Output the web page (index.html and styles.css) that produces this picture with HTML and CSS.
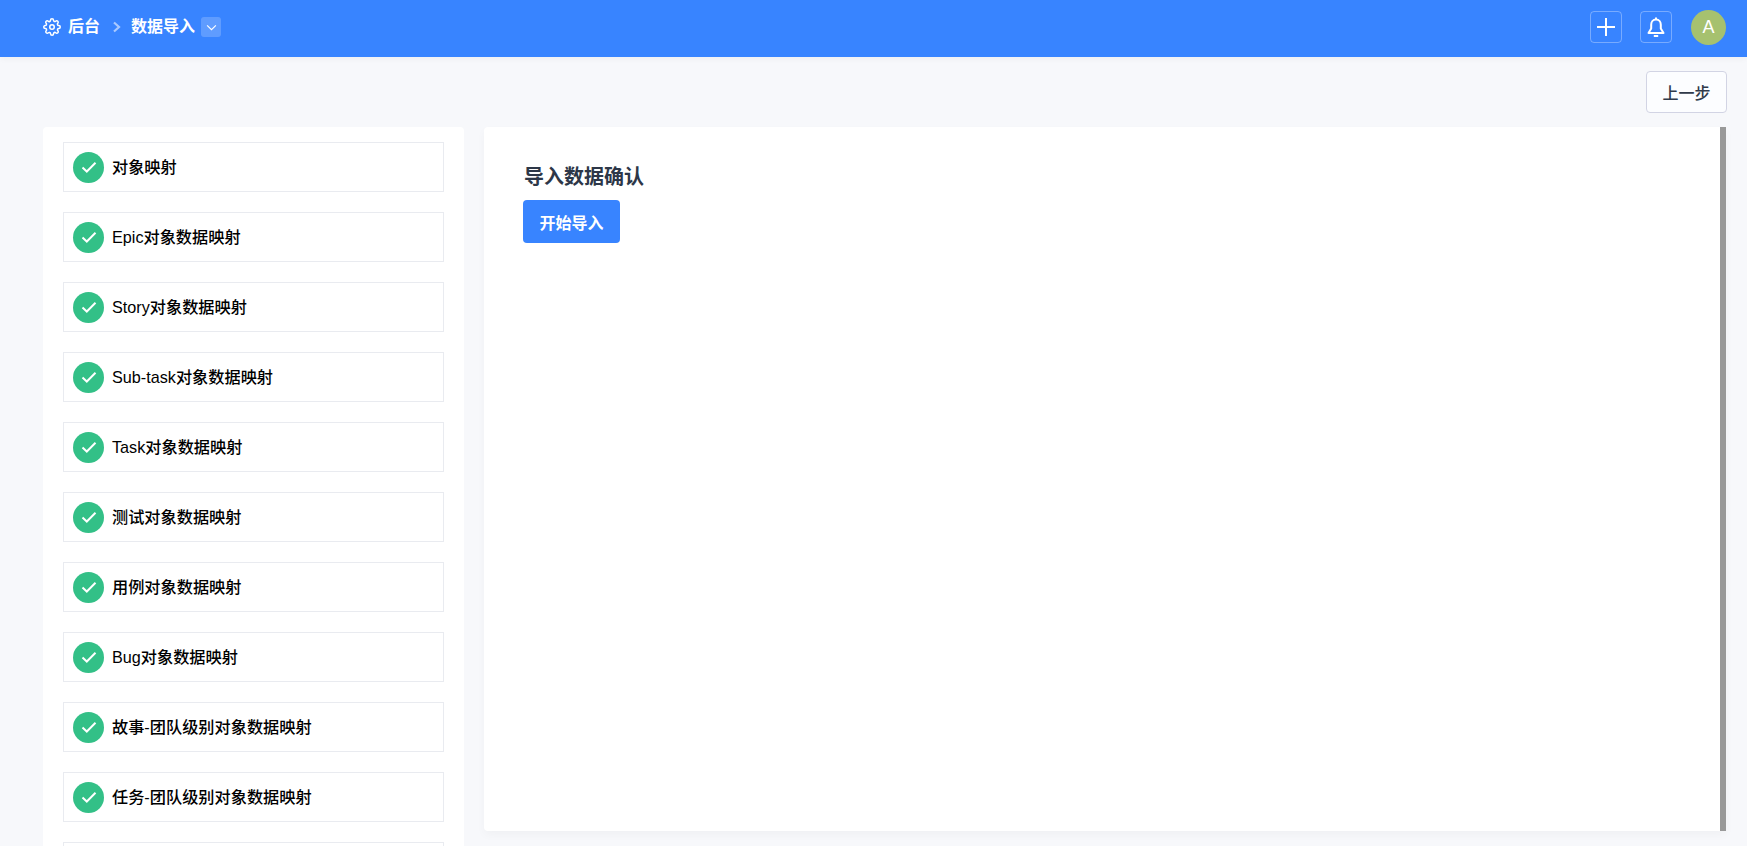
FILE: index.html
```html
<!DOCTYPE html>
<html lang="zh">
<head>
<meta charset="utf-8">
<title>数据导入</title>
<link rel="stylesheet" href="styles.css">
</head>
<body>
<div class="app">
  <header class="topbar">
    <nav class="crumbs">
      <svg class="gear" viewBox="0 0 24 24" width="18" height="18" fill="none" stroke="#fff" stroke-width="2" stroke-linejoin="round" stroke-linecap="round">
        <circle cx="12" cy="12" r="3"/>
        <path d="M19.4 15a1.65 1.65 0 0 0 .33 1.82l.06.06a2 2 0 0 1 0 2.83 2 2 0 0 1-2.83 0l-.06-.06a1.65 1.65 0 0 0-1.82-.33 1.65 1.65 0 0 0-1 1.51V21a2 2 0 0 1-2 2 2 2 0 0 1-2-2v-.09A1.65 1.65 0 0 0 9 19.4a1.65 1.65 0 0 0-1.82.33l-.06.06a2 2 0 0 1-2.83 0 2 2 0 0 1 0-2.83l.06-.06a1.65 1.65 0 0 0 .33-1.82 1.65 1.65 0 0 0-1.51-1H3a2 2 0 0 1-2-2 2 2 0 0 1 2-2h.09A1.65 1.65 0 0 0 4.6 9a1.65 1.65 0 0 0-.33-1.82l-.06-.06a2 2 0 0 1 0-2.83 2 2 0 0 1 2.83 0l.06.06a1.65 1.65 0 0 0 1.82.33H9a1.65 1.65 0 0 0 1-1.51V3a2 2 0 0 1 2-2 2 2 0 0 1 2 2v.09a1.65 1.65 0 0 0 1 1.51 1.65 1.65 0 0 0 1.82-.33l.06-.06a2 2 0 0 1 2.83 0 2 2 0 0 1 0 2.83l-.06.06a1.65 1.65 0 0 0-.33 1.82V9a1.65 1.65 0 0 0 1.51 1H21a2 2 0 0 1 2 2 2 2 0 0 1-2 2h-.09a1.65 1.65 0 0 0-1.51 1z"/>
      </svg>
      <span class="crumb">后台</span>
      <svg class="sep" viewBox="0 0 10 12" width="10" height="12" fill="none" stroke="#a9c9ff" stroke-width="2.200"><path d="M2 1.500 7 6l-5 4.500"/></svg>
      <span class="crumb">数据导入</span>
      <span class="drop"><svg viewBox="0 0 12 8" width="11" height="7" fill="none" stroke="#fff" stroke-width="1.300"><path d="M1 1.500 6 6.500l5-5"/></svg></span>
    </nav>
    <div class="actions">
      <button class="icon-btn"><svg viewBox="0 0 20 20" width="20" height="20" fill="none" stroke="#fff" stroke-width="2"><path d="M10 1v18M1 10h18"/></svg></button>
      <button class="icon-btn"><svg viewBox="0 0 20 22" width="20" height="22" fill="none" stroke="#fff" stroke-width="2" stroke-linejoin="round"><path d="M10 3.500c-3.200 0-4.800 2.500-4.800 5.200v3.800L2.500 17h15l-2.700-4.500V8.700c0-2.700-1.600-5.200-4.800-5.200z"/><path d="M7.800 20h4.400"/><path d="M10 1.500v2"/></svg></button>
      <div class="avatar">A</div>
    </div>
  </header>
  <div class="toolbar"><button class="back">上一步</button></div>
  <main class="content">
    <aside class="steps">
      <div class="step"><span class="check"><svg viewBox="0 0 16 16" width="16" height="16" fill="none" stroke="#fff" stroke-width="2"><path d="M1.500 8.500l4.300 4L14.500 3.800"/></svg></span>对象映射</div>
      <div class="step"><span class="check"><svg viewBox="0 0 16 16" width="16" height="16" fill="none" stroke="#fff" stroke-width="2"><path d="M1.500 8.500l4.300 4L14.500 3.800"/></svg></span>Epic对象数据映射</div>
      <div class="step"><span class="check"><svg viewBox="0 0 16 16" width="16" height="16" fill="none" stroke="#fff" stroke-width="2"><path d="M1.500 8.500l4.300 4L14.500 3.800"/></svg></span>Story对象数据映射</div>
      <div class="step"><span class="check"><svg viewBox="0 0 16 16" width="16" height="16" fill="none" stroke="#fff" stroke-width="2"><path d="M1.500 8.500l4.300 4L14.500 3.800"/></svg></span>Sub-task对象数据映射</div>
      <div class="step"><span class="check"><svg viewBox="0 0 16 16" width="16" height="16" fill="none" stroke="#fff" stroke-width="2"><path d="M1.500 8.500l4.300 4L14.500 3.800"/></svg></span>Task对象数据映射</div>
      <div class="step"><span class="check"><svg viewBox="0 0 16 16" width="16" height="16" fill="none" stroke="#fff" stroke-width="2"><path d="M1.500 8.500l4.300 4L14.500 3.800"/></svg></span>测试对象数据映射</div>
      <div class="step"><span class="check"><svg viewBox="0 0 16 16" width="16" height="16" fill="none" stroke="#fff" stroke-width="2"><path d="M1.500 8.500l4.300 4L14.500 3.800"/></svg></span>用例对象数据映射</div>
      <div class="step"><span class="check"><svg viewBox="0 0 16 16" width="16" height="16" fill="none" stroke="#fff" stroke-width="2"><path d="M1.500 8.500l4.300 4L14.500 3.800"/></svg></span>Bug对象数据映射</div>
      <div class="step"><span class="check"><svg viewBox="0 0 16 16" width="16" height="16" fill="none" stroke="#fff" stroke-width="2"><path d="M1.500 8.500l4.300 4L14.500 3.800"/></svg></span>故事-团队级别对象数据映射</div>
      <div class="step"><span class="check"><svg viewBox="0 0 16 16" width="16" height="16" fill="none" stroke="#fff" stroke-width="2"><path d="M1.500 8.500l4.300 4L14.500 3.800"/></svg></span>任务-团队级别对象数据映射</div>
      <div class="step"></div>
    </aside>
    <section class="panel">
      <div class="panel-body">
        <h2 class="title">导入数据确认</h2>
        <button class="primary">开始导入</button>
      </div>
      <div class="scrollbar"></div>
    </section>
  </main>
</div>
</body>
</html>
```
FILE: styles.css
```css
* { box-sizing: border-box; }
html, body { margin: 0; height: 846px; overflow: hidden; }
body {
  background: #f7f8fb;
  font-family: "Liberation Sans", "Noto Sans CJK SC", sans-serif;
  color: #000;
}
button { font-family: inherit; cursor: pointer; }
.app { display: flex; flex-direction: column; height: 846px; overflow: hidden; }
.topbar {
  flex: none;
  height: 57px;
  background: #3884ff;
  display: flex;
  align-items: center;
  justify-content: space-between;
  padding: 0 21px 3px 43px;
  box-shadow: 0 2px 6px rgba(0, 0, 0, .04);
}
.crumbs { display: flex; align-items: center; }
.gear { margin-right: 7px; }
.crumb { color: #fff; font-size: 16px; font-weight: 700; line-height: 20px; }
.sep { margin: 0 9px 0 12px; }
.drop {
  width: 20px;
  height: 20px;
  margin-left: 6px;
  border-radius: 3px;
  background: rgba(255, 255, 255, .2);
  display: flex;
  align-items: center;
  justify-content: center;
}
.actions { display: flex; align-items: center; gap: 18px; }
.icon-btn {
  width: 32px;
  height: 32px;
  padding: 0;
  background: transparent;
  border: 1px solid rgba(255, 255, 255, .32);
  border-radius: 4px;
  display: flex;
  align-items: center;
  justify-content: center;
}
.avatar {
  width: 35px;
  height: 35px;
  margin-left: 1px;
  border-radius: 50%;
  background: #a6c16f;
  color: #fff;
  font-size: 18px;
  display: flex;
  align-items: center;
  justify-content: center;
}
.toolbar {
  flex: none;
  height: 70px;
  padding: 14px 20px 0 0;
  display: flex;
  justify-content: flex-end;
  align-items: flex-start;
}
.back {
  width: 81px;
  height: 42px;
  background: #fcfdff;
  border: 1px solid #d2d4e4;
  border-radius: 4px;
  color: #303a4a;
  font-size: 16px;
  font-weight: 500;
}
.content {
  flex: none;
  display: flex;
  gap: 20px;
  padding: 0 21px 0 43px;
  align-items: flex-start;
}
.steps {
  flex: none;
  width: 421px;
  height: 719px;
  background: #fff;
  border-radius: 4px 4px 0 0;
  padding: 15px 20px 0;
  display: flex;
  flex-direction: column;
  gap: 20px;
  overflow: hidden;
}
.step {
  flex: none;
  height: 50px;
  border: 1px solid #e9ebf0;
  display: flex;
  align-items: center;
  padding-left: 9px;
  font-size: 16.2px;
  font-weight: 500;
  line-height: 20px;
}
.check {
  flex: none;
  width: 31px;
  height: 31px;
  margin-right: 8px;
  border-radius: 50%;
  background: #33c087;
  display: flex;
  align-items: center;
  justify-content: center;
}
.panel {
  flex: 1;
  height: 704px;
  background: #fff;
  border-radius: 4px 0 0 4px;
  box-shadow: 0 4px 10px rgba(0, 0, 0, .03);
  display: flex;
}
.panel-body { flex: 1; padding: 37px 39px; }
.scrollbar { flex: none; width: 6px; background: #999; }
.title {
  margin: 0 0 10px 1px;
  font-size: 20px;
  line-height: 26px;
  font-weight: 700;
  color: #2d3748;
}
.primary {
  display: block;
  width: 97px;
  height: 43px;
  background: #3884ff;
  border: 0;
  border-radius: 4px;
  color: #fff;
  font-size: 16px;
  font-weight: 700;
}
```
